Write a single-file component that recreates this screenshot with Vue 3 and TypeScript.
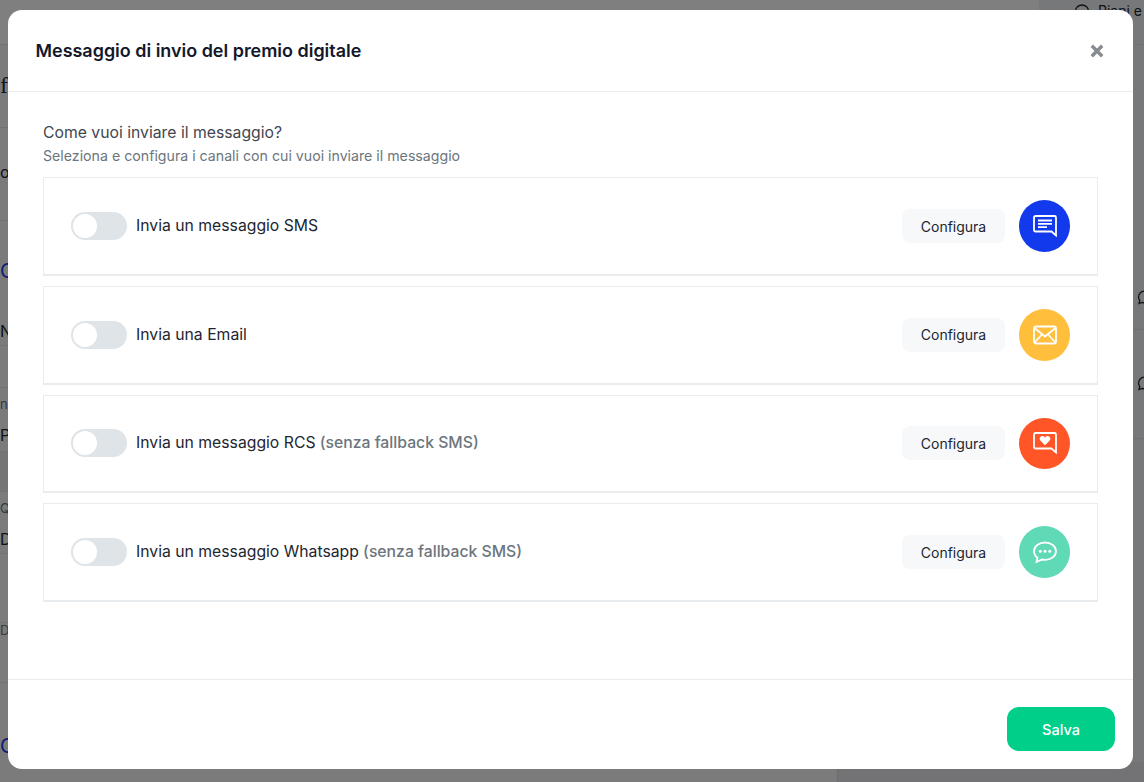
<script setup lang="ts">
interface Channel {
  id: string
  label: string
  note?: string
  color: string
}
const channels: Channel[] = [
  { id: 'sms', label: 'Invia un messaggio SMS', color: '#1239eb' },
  { id: 'email', label: 'Invia una Email', color: '#ffbf3c' },
  { id: 'rcs', label: 'Invia un messaggio RCS', note: '(senza fallback SMS)', color: '#ff5527' },
  { id: 'wa', label: 'Invia un messaggio Whatsapp', note: '(senza fallback SMS)', color: '#5fd9b6' },
]
const leftRows = [
  { h: 45, t: '', c: '' },
  { h: 83, t: 'f', c: 'serif' },
  { h: 93, t: 'oc', c: 'plain' },
  { h: 62, t: 'C', c: 'link flat' },
  { h: 63, t: 'Ne', c: 'pu low' },
  { h: 42, t: '', c: '' },
  { h: 24, t: 'ns', c: 'tiny flat' },
  { h: 40, t: 'Pu', c: 'pu' },
  { h: 40, t: '', c: 'band' },
  { h: 24, t: 'Qu', c: 'tiny flat' },
  { h: 38, t: 'De', c: 'pu low' },
  { h: 69, t: '', c: '' },
  { h: 60, t: 'De', c: 'small' },
  { h: 75, t: 'C', c: 'link flat' },
]
const bubble = 'M8 2c3.600 0 6.500 2.700 6.500 6s-2.900 6-6.500 6c-1 0-2-.2-2.800-.6L2 14.500l.8-3A6 6 0 0 1 1.500 8C1.500 4.700 4.400 2 8 2z'
</script>

<template>
  <div class="page">
    <div class="strip">
      <div v-for="(r, i) in leftRows" :key="i" class="strip-row" :class="r.c" :style="{ height: r.h + 'px' }">{{ r.t }}</div>
    </div>
    <div class="side">
      <div class="side-head">
        <svg class="side-ico" viewBox="0 0 16 16" width="16" height="16">
          <path :d="bubble" fill="none" stroke="#222" stroke-width="1.300" />
          <path d="M5 8h1M7.500 8h1M10 8h1" stroke="#222" stroke-width="1.300" />
        </svg>
        <span>Piani e</span>
      </div>
      <div class="side-row first">
        <svg class="row-ico" viewBox="0 0 16 16" width="16" height="16"><path :d="bubble" fill="none" stroke="#222" stroke-width="1.300" /></svg>
      </div>
      <div class="side-row second">
        <svg class="row-ico" viewBox="0 0 16 16" width="16" height="16"><path :d="bubble" fill="none" stroke="#222" stroke-width="1.300" /></svg>
      </div>
    </div>
    <div class="under-foot"></div>
    <div class="backdrop">
      <div class="modal">
        <header class="modal-head">
          <h1>Messaggio di invio del premio digitale</h1>
          <button class="close" aria-label="Chiudi">
            <svg viewBox="0 0 14 14" width="14" height="14"><path d="M1.800 1.800l10.400 10.400M12.200 1.800L1.800 12.200" stroke="#868b90" stroke-width="3.400" /></svg>
          </button>
        </header>
        <main class="modal-body">
          <p class="question">Come vuoi inviare il messaggio?</p>
          <p class="hint">Seleziona e configura i canali con cui vuoi inviare il messaggio</p>
          <section class="cards">
            <article v-for="ch in channels" :key="ch.id" class="card">
              <span class="switch"><span class="knob"></span></span>
              <span class="label">{{ ch.label }}<span v-if="ch.note" class="note">{{ ' ' + ch.note }}</span></span>
              <button class="config">Configura</button>
              <span class="badge" :style="{ background: ch.color }">
                <svg v-if="ch.id === 'sms'" viewBox="0 0 24 22" width="24" height="22" fill="none" stroke="#fff" stroke-width="1.800">
                  <path d="M2.500 1h19A1.500 1.500 0 0 1 23 2.500V20.500L18.500 16.500H2.500A1.500 1.500 0 0 1 1 15V2.500A1.500 1.500 0 0 1 2.500 1z" />
                  <path d="M5 5.500h14M5 8.800h14M5 12.200h9" />
                </svg>
                <svg v-else-if="ch.id === 'email'" viewBox="0 0 24 20" width="24" height="20" fill="none" stroke="#fff" stroke-width="1.800">
                  <rect x="1" y="1.500" width="22" height="17" rx="2" />
                  <path d="M1.500 3l10.500 8.500L22.500 3M1.500 17.500l7.500-8M22.500 17.500l-7.500-8" />
                </svg>
                <svg v-else-if="ch.id === 'rcs'" viewBox="0 0 24 22" width="24" height="22" fill="none" stroke="#fff" stroke-width="1.800">
                  <path d="M2.500 1h19A1.500 1.500 0 0 1 23 2.500V20.500L18.500 16.500H2.500A1.500 1.500 0 0 1 1 15V2.500A1.500 1.500 0 0 1 2.500 1z" />
                  <path d="M12 13.200L7.300 8.600a2.700 2.700 0 0 1 0-3.600 2.800 2.800 0 0 1 4.700 .8 2.800 2.800 0 0 1 4.700-.8 2.700 2.700 0 0 1 0 3.600z" fill="#fff" stroke="none" />
                </svg>
                <svg v-else viewBox="0 0 24 22" width="24" height="22" fill="none" stroke="#fff" stroke-width="1.800">
                  <path d="M12 1.500c6 0 11 3.700 11 8.700s-5 8.600-11 8.600c-1 0-2-.1-3-.3L3.500 21l1-4.300C2.300 15.100 1 12.900 1 10.200 1 5.200 6 1.500 12 1.500z" />
                  <circle cx="7.300" cy="10.300" r="1.500" fill="#fff" stroke="none" />
                  <circle cx="12" cy="10.300" r="1.500" fill="#fff" stroke="none" />
                  <circle cx="16.700" cy="10.300" r="1.500" fill="#fff" stroke="none" />
                </svg>
              </span>
            </article>
          </section>
        </main>
        <footer class="modal-foot">
          <button class="save">Salva</button>
        </footer>
      </div>
    </div>
  </div>
</template>

<style scoped>
.page {
  position: relative;
  width: 1144px;
  height: 782px;
  overflow: hidden;
  background: linear-gradient(#fff 45px, #f6f7f9 45px);
  display: flex;
  justify-content: space-between;
  font-family: Inter, "Liberation Sans", sans-serif;
}
.strip { width: 60px; display: flex; flex-direction: column; }
.strip-row {
  flex: none;
  border-bottom: 1px solid #e3e5e8;
  font-size: 16px;
  color: #212529;
  white-space: nowrap;
  display: flex;
  align-items: flex-end;
  padding-bottom: 6px;
  box-sizing: border-box;
}
.serif { font-family: "Liberation Serif", serif; font-size: 24px; color: #1c2a4a; padding-bottom: 28px; }
.plain { padding-bottom: 38px; }
.band { background: #e9ebee; }
.pu { padding-bottom: 6px; }
.low { padding-bottom: 4px; }
.tiny { font-size: 13px; color: #6c757d; padding-bottom: 0; }
.flat { border-bottom: 0; }
.small { font-size: 13px; color: #6c757d; padding-bottom: 44px; }
.link { font-size: 20px; color: #1239eb; padding-bottom: 0; }
.side { width: 105px; background: #eff0f3; display: flex; flex-direction: column; }
.side-head {
  height: 45px;
  flex: none;
  display: flex;
  gap: 8px;
  padding: 2px 0 0 0;
  font-size: 14px;
  color: #222;
  box-sizing: border-box;
  border-bottom: 1px solid #e3e5e8;
}
.side-ico { margin-top: 1px; margin-left: 35px; }
.side-row {
  flex: none;
  box-sizing: border-box;
  border-bottom: 1px solid #dfe1e5;
  display: flex;
  align-items: flex-end;
  padding-left: 98px;
}
.first { height: 285px; padding-bottom: 24px; }
.second { height: 109px; padding-bottom: 47px; }
.row-ico { flex: none; }
.under-foot {
  position: absolute;
  left: 837px;
  right: 0;
  bottom: 0;
  height: 20px;
  background: #e6e7eb;
  border-left: 1px solid #d9dade;
}
.backdrop {
  position: absolute;
  inset: 0;
  background: rgba(0, 0, 0, 0.5);
  display: flex;
  padding: 10px 11px 13px 8px;
  box-sizing: border-box;
}
.modal {
  flex: 1;
  background: #fff;
  border-radius: 14px;
  display: flex;
  flex-direction: column;
  color: #212529;
}
.modal-head {
  height: 82px;
  flex: none;
  box-sizing: border-box;
  border-bottom: 1px solid #e9ecef;
  display: flex;
  align-items: center;
  justify-content: space-between;
  padding: 0 29px 0 27.500px;
}
h1 {
  margin: 0;
  font-size: 17.960px;
  font-weight: 600;
  color: #14182b;
}
.close { border: 0; background: none; padding: 0; display: flex; }
.modal-body {
  flex: 1;
  padding: 30px 35px 0;
}
.question {
  margin: 0;
  font-size: 15.750px;
  line-height: 22px;
  color: #3f4650;
}
.hint {
  margin: 3px 0 0;
  font-size: 14.180px;
  line-height: 18px;
  color: #6c757d;
}
.cards { margin-top: 12.300px; display: flex; flex-direction: column; gap: 10px; }
.card {
  height: 98.670px;
  box-sizing: border-box;
  border: 1px solid #e9ecef;
  border-bottom-width: 2px;
  display: flex;
  align-items: center;
  padding: 0 27px;
}
.switch {
  width: 56px;
  height: 28px;
  flex: none;
  border-radius: 14px;
  background: #dfe4e8;
  display: flex;
  align-items: center;
  padding-left: 2px;
  box-sizing: border-box;
}
.knob { width: 24px; height: 24px; border-radius: 50%; background: #fff; }
.label { margin-left: 9px; flex: 1; font-size: 15.760px; padding-bottom: 1px; color: #212631; }
.note { color: #6c757d; font-weight: 500; }
.config {
  width: 103px;
  height: 34px;
  border: 0;
  border-radius: 8px;
  background: #f7f8fa;
  color: #212631;
  font: 400 14px Inter, "Liberation Sans", sans-serif;
  padding: 0;
}
.badge {
  margin-left: 14px;
  width: 51px;
  height: 51.500px;
  border-radius: 50%;
  flex: none;
  display: flex;
  align-items: center;
  justify-content: center;
}
.modal-foot {
  height: 90px;
  flex: none;
  box-sizing: border-box;
  border-top: 1px solid #e9ecef;
  display: flex;
  justify-content: flex-end;
  align-items: flex-start;
  padding: 27px 18px 0 0;
}
.save {
  width: 108px;
  height: 44px;
  border: 0;
  border-radius: 12px;
  background: #00cf8a;
  color: #fff;
  font: 500 14.500px Inter, "Liberation Sans", sans-serif;
}
</style>
